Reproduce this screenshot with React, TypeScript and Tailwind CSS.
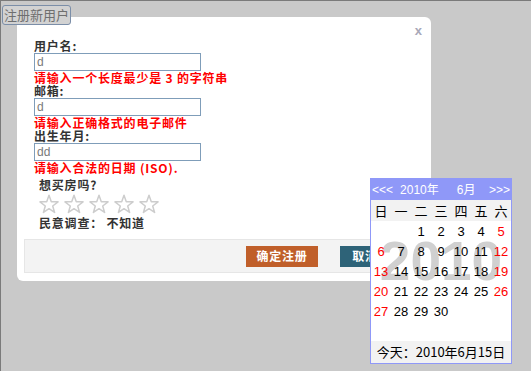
import React from "react";

const cjk = { fontFamily: '"Noto Sans CJK SC", "Liberation Sans", sans-serif' };
const latin = { fontFamily: '"Liberation Sans", "Noto Sans CJK SC", sans-serif' };

const fields = [
  { label: "用户名:", value: "d", error: "请输入一个长度最少是 3 的字符串" },
  { label: "邮箱:", value: "d", error: "请输入正确格式的电子邮件" },
  { label: "出生年月:", value: "dd", error: "请输入合法的日期 (ISO)." },
];

const weeks: (number | null)[][] = [
  [null, null, 1, 2, 3, 4, 5],
  [6, 7, 8, 9, 10, 11, 12],
  [13, 14, 15, 16, 17, 18, 19],
  [20, 21, 22, 23, 24, 25, 26],
  [27, 28, 29, 30, null, null, null],
  [null, null, null, null, null, null, null],
];

const Star = () => (
  <svg width="20" height="20" viewBox="0 0 20 20">
    <polygon
      points="10,1.3 12.29,7.64 19.03,7.86 13.71,12.01 15.58,18.49 10,14.7 4.42,18.49 6.29,12.01 0.97,7.86 7.71,7.64"
      fill="#ffffff"
      stroke="#cdcdcd"
      strokeWidth="1.5"
      strokeLinejoin="round"
    />
  </svg>
);

const Calendar = () => (
  <div className="absolute left-[369px] top-[177px] w-[142px] border border-[#8f98f8] bg-white">
    <div className="flex h-[21px] items-center bg-[#8f98f8] text-[12px] text-white" style={latin}>
      <span className="pl-[1px]">&lt;&lt;&lt;</span>
      <span className="ml-[7px]">2010年</span>
      <span className="ml-[18px]">6月</span>
      <span className="ml-auto pr-[1px]">&gt;&gt;&gt;</span>
    </div>
    <div className="grid h-[21px] grid-cols-7 items-center bg-[#f2f2f2] text-[13px] text-black" style={cjk}>
      {["日", "一", "二", "三", "四", "五", "六"].map((d) => (
        <span key={d} className="text-center leading-none">{d}</span>
      ))}
    </div>
    <div className="relative">
      <div
        className="absolute left-0 right-0 top-[13px] text-center text-[55px] font-bold leading-[54px] text-[#d0d0d0]"
        style={latin}
      >
        2010
      </div>
      <div className="relative" style={latin}>
        {weeks.map((w, i) => (
          <div key={i} className="grid h-[20px] grid-cols-7 items-center text-[13px]">
            {w.map((d, j) => (
              <span
                key={j}
                className={`text-center leading-none ${j === 0 || j === 6 ? "text-[#ff0000]" : "text-black"}`}
              >
                {d ?? ""}
              </span>
            ))}
          </div>
        ))}
      </div>
    </div>
    <div className="flex h-[22px] items-center justify-center bg-[#f2f2f2] text-[13px] text-black" style={cjk}>
      今天：2010年6月15日
    </div>
  </div>
);

export default function App() {
  return (
    <div className="relative h-[371px] w-[531px] overflow-hidden border-l border-t border-[#7a7a7a] bg-[#c9c9c9]">
      <button
        className="relative z-10 ml-[1px] mt-[4px] flex h-[20px] w-[69px] items-center justify-center rounded-[3px] border border-[#7b8ea8] bg-[#d2d2d2] text-[13px] text-[#6f6f6f]"
        style={cjk}
      >
        注册新用户
      </button>

      <div className="absolute left-[16px] top-[16px] flex h-[264px] w-[414px] flex-col rounded-[6px] bg-white">
        <span className="absolute right-[9px] top-[4px] text-[13px] font-bold text-[#a8a8b8]" style={latin}>
          x
        </span>
        <div className="px-[17px] pt-[22px]" style={cjk}>
          {fields.map((f) => (
            <div key={f.label}>
              <div className="text-[12px] font-bold leading-[14px] tracking-[0.8px] text-[#333333]">{f.label}</div>
              <div
                className="flex h-[18px] w-[167px] items-center border border-[#7f9db9] bg-white pl-[2px] text-[12px] text-[#7a7a7a]"
                style={latin}
              >
                {f.value}
              </div>
              <div className="text-[12px] font-bold leading-[13px] tracking-[0.8px] text-[#ff0000]">{f.error}</div>
            </div>
          ))}
          <div className="mt-[4px] pl-[5px]">
            <div className="text-[12px] font-bold leading-[14px] tracking-[0.8px] text-[#333333]">想买房吗?</div>
            <div className="mt-[2px] flex gap-[5px]">
              <Star />
              <Star />
              <Star />
              <Star />
              <Star />
            </div>
            <div className="mt-[2px] text-[12px] font-bold leading-[14px] tracking-[0.8px] text-[#333333]">
              民意调查： 不知道
            </div>
          </div>
        </div>
        <div className="mx-[7px] mt-[9px] flex h-[34px] items-center justify-end gap-[22px] border border-[#e6e6e6] bg-[#f3f3f3] pr-[33px]" style={cjk}>
          <div className="flex h-[21px] w-[72px] items-center justify-center bg-[#c05f2a] text-[12px] font-bold tracking-[0.8px] text-white">
            确定注册
          </div>
          <div className="flex h-[21px] w-[50px] items-center justify-center bg-[#2e6378] text-[12px] font-bold tracking-[0.8px] text-white">
            取消
          </div>
        </div>
      </div>

      <Calendar />
    </div>
  );
}
